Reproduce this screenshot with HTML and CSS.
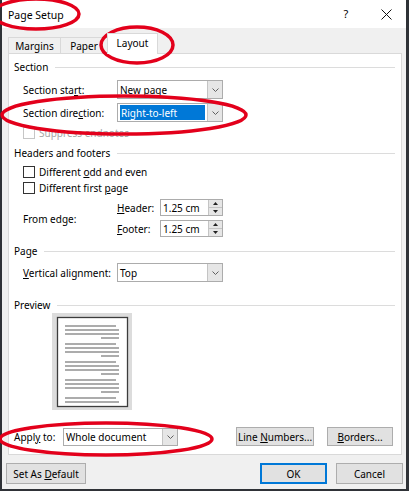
FILE: index.html
```html
<!DOCTYPE html>
<html>
<head>
<meta charset="utf-8">
<title>Page Setup</title>
<link rel="stylesheet" href="styles.css">
</head>
<body>
<div class="window">
  <div class="titlebar">
    <span class="title">Page Setup</span>
    <span class="cap help">?</span>
    <span class="cap close"><svg width="11" height="11" viewBox="0 0 11 11"><path d="M0.5 0.5 L10.5 10.5 M10.5 0.5 L0.5 10.5" stroke="#111" stroke-width="1" fill="none"/></svg></span>
  </div>
  <div class="tabs">
    <div class="tab t-margins">Margins</div>
    <div class="tab t-paper">Paper</div>
    <div class="tab t-layout active">Layout</div>
  </div>
  <div class="panel">
    <div class="glabel">Section</div>
    <div class="row r-start">
      <span class="lbl">Section sta<u>r</u>t:</span>
      <div class="combo">
        <span class="combo-text">New page</span>
        <span class="combo-btn"><svg width="7" height="4" viewBox="0 0 7 4"><path d="M0.5 0.5 L3.5 3.5 L6.5 0.5" stroke="#606060" fill="none"/></svg></span>
      </div>
    </div>
    <div class="row r-dir">
      <span class="lbl">Section dire<u>c</u>tion:</span>
      <div class="combo">
        <span class="combo-text"><span class="sel">Right-to-left</span></span>
        <span class="combo-btn"><svg width="7" height="4" viewBox="0 0 7 4"><path d="M0.5 0.5 L3.5 3.5 L6.5 0.5" stroke="#606060" fill="none"/></svg></span>
      </div>
    </div>
    <div class="row cb r-suppress disabled">
      <span class="box"></span><span>Suppress endnotes</span>
    </div>
    <div class="glabel g-hf">Headers and footers</div>
    <div class="row cb r-odd">
      <span class="box"></span><span>Different <u>o</u>dd and even</span>
    </div>
    <div class="row cb r-first">
      <span class="box"></span><span>Different first <u>p</u>age</span>
    </div>
    <div class="edge">
      <span class="lbl edge-lbl">From edge:</span>
      <div class="edge-fields">
        <div class="field">
          <span class="field-lbl"><u>H</u>eader:</span>
          <div class="spin">
            <span class="spin-text">1.25 cm</span>
            <span class="spin-btns">
              <span class="sb"><svg width="5" height="3" viewBox="0 0 5 3"><path d="M0 3 L2.5 0 L5 3 Z" fill="#222"/></svg></span>
              <span class="sb sb-down"><svg width="5" height="3" viewBox="0 0 5 3"><path d="M0 0 L2.5 3 L5 0 Z" fill="#222"/></svg></span>
            </span>
          </div>
        </div>
        <div class="field">
          <span class="field-lbl"><u>F</u>ooter:</span>
          <div class="spin">
            <span class="spin-text">1.25 cm</span>
            <span class="spin-btns">
              <span class="sb"><svg width="5" height="3" viewBox="0 0 5 3"><path d="M0 3 L2.5 0 L5 3 Z" fill="#222"/></svg></span>
              <span class="sb sb-down"><svg width="5" height="3" viewBox="0 0 5 3"><path d="M0 0 L2.5 3 L5 0 Z" fill="#222"/></svg></span>
            </span>
          </div>
        </div>
      </div>
    </div>
    <div class="glabel g-page">Page</div>
    <div class="row r-valign">
      <span class="lbl"><u>V</u>ertical alignment:</span>
      <div class="combo">
        <span class="combo-text">Top</span>
        <span class="combo-btn"><svg width="7" height="4" viewBox="0 0 7 4"><path d="M0.5 0.5 L3.5 3.5 L6.5 0.5" stroke="#606060" fill="none"/></svg></span>
      </div>
    </div>
    <div class="glabel g-preview">Preview</div>
    <div class="preview">
      <svg width="80" height="97" viewBox="0 0 80 97">
        <rect x="0" y="0" width="80" height="97" fill="#dcdcdc"/>
        <rect x="5.5" y="4.5" width="70" height="89" fill="#fff" stroke="#3c3c3c" stroke-width="1.3"/>
        <g stroke="#5a5a5a" stroke-width="1.2">
          <path d="M13 13 H64 M13 17 H67 M13 21 H67 M49 25 H67"/>
          <path d="M13 31 H64 M13 35 H67 M13 39 H67 M49 43 H67"/>
          <path d="M13 49 H64 M13 53 H67 M13 57 H67 M49 61 H67"/>
          <path d="M13 67 H64 M13 71 H67 M13 75 H67 M49 79 H67"/>
          <path d="M13 85 H64 M13 89 H67"/>
        </g>
      </svg>
    </div>
    <div class="row r-apply">
      <span class="apply-lbl">Appl<u>y</u> to:</span>
      <div class="combo combo-apply">
        <span class="combo-text">Whole document</span>
        <span class="combo-btn"><svg width="7" height="4" viewBox="0 0 7 4"><path d="M0.5 0.5 L3.5 3.5 L6.5 0.5" stroke="#606060" fill="none"/></svg></span>
      </div>
      <span class="btn btn-lines"><span>Line <u>N</u>umbers...</span></span>
      <span class="btn btn-borders"><span><u>B</u>orders...</span></span>
    </div>
  </div>
  <div class="footer">
    <span class="btn btn-default"><span>Set As <u>D</u>efault</span></span>
    <span class="btn btn-ok"><span>OK</span></span>
    <span class="btn btn-cancel"><span>Cancel</span></span>
  </div>
</div>
<svg class="annot" width="409" height="491" viewBox="0 0 409 491">
  <g fill="none" stroke="#e3001b" stroke-width="3.5">
    <ellipse cx="36" cy="14" rx="43" ry="15"/>
    <ellipse cx="137" cy="45" rx="36" ry="18"/>
    <ellipse cx="124" cy="115" rx="122" ry="19"/>
    <ellipse cx="106" cy="439" rx="106" ry="16"/>
  </g>
</svg>
</body>
</html>
```
FILE: styles.css
```css
* { box-sizing: border-box; }
html, body { margin: 0; padding: 0; }
body {
  width: 409px;
  height: 491px;
  overflow: hidden;
  position: relative;
  background: #2f3237;
  font-family: "Noto Sans", "Open Sans", sans-serif;
  font-size: 10px;
  line-height: 14px;
  color: #000;
}
u { text-decoration: underline; text-underline-offset: 1px; }

.window {
  margin-left: 2px;
  width: 404px;
  height: 489px;
  background: #f0f0f0;
  display: flex;
  flex-direction: column;
}

.titlebar {
  flex: none;
  height: 28px;
  background: #fff;
  display: flex;
  align-items: center;
  padding-left: 6px;
}
.title { flex: 1; font-size: 10.5px; margin-top: 1px; }
.cap {
  width: 40px;
  height: 28px;
  display: flex;
  align-items: center;
  justify-content: center;
}
.help { font-size: 11px; }

.tabs {
  flex: none;
  height: 25px;
  display: flex;
  align-items: flex-end;
  padding-left: 6px;
}
.tab {
  height: 16px;
  border: 1px solid #d9d9d9;
  border-bottom: none;
  background: #f0f0f0;
  display: flex;
  align-items: center;
  justify-content: center;
}
.tab + .tab { margin-left: -1px; }
.t-margins { width: 53px; }
.t-paper { width: 48px; }
.t-layout { width: 51px; }
.tab.active {
  height: 21px;
  margin-bottom: -1px;
  background: #fff;
  position: relative;
  z-index: 2;
  padding-bottom: 2px;
}

.panel {
  flex: none;
  margin-left: 6px;
  width: 394px;
  background: #fff;
  border: 1px solid #d9d9d9;
  padding: 6px 6px 8px 5px;
  display: flex;
  flex-direction: column;
}

.glabel {
  height: 14px;
  display: flex;
  align-items: center;
  gap: 7px;
}
.glabel::after {
  content: "";
  flex: 1;
  height: 1px;
  background: #dcdcdc;
}
.g-hf { margin-top: 7px; }
.g-page { margin-top: 7px; }
.g-preview { margin-top: 16px; }

.row {
  display: flex;
  align-items: center;
  padding-left: 9px;
}
.lbl { width: 94px; flex: none; }

.r-start { height: 19px; margin-top: 6px; }
.r-dir { height: 19px; margin-top: 4px; }
.r-suppress { height: 12px; margin-top: 5px; }
.r-odd { height: 14px; margin-top: 5px; }
.r-first { height: 14px; margin-top: 2px; }
.r-valign { height: 19px; margin-top: 5px; }

.combo {
  width: 106px;
  height: 19px;
  border: 1px solid #acacac;
  background: #fff;
  display: flex;
}
.combo-text {
  flex: 1;
  display: flex;
  align-items: center;
  padding-left: 2px;
}
.sel {
  background: #0078d7;
  color: #fff;
  flex: 1;
  align-self: stretch;
  margin: 1px 2px 1px 0;
  padding-left: 1px;
  display: flex;
  align-items: center;
}
.combo-btn {
  width: 15px;
  flex: none;
  background: #e6e6e6;
  border-left: 1px solid #c4c4c4;
  display: flex;
  align-items: center;
  justify-content: center;
}

.cb .box {
  width: 12px;
  height: 12px;
  border: 1px solid #333;
  background: #fff;
  margin-right: 4px;
  flex: none;
}
.disabled { color: #a6a6a6; }
.disabled .box { border-color: #c6c6c6; }

.edge {
  display: flex;
  padding-left: 9px;
  height: 38px;
  margin-top: 4px;
}
.edge-lbl {
  display: flex;
  align-items: center;
  padding-top: 2px;
}
.edge-fields {
  display: flex;
  flex-direction: column;
  gap: 4px;
}
.field {
  display: flex;
  align-items: center;
  height: 17px;
}
.field-lbl { width: 43px; }
.spin {
  width: 63px;
  height: 17px;
  border: 1px solid #acacac;
  background: #fff;
  display: flex;
}
.spin-text {
  flex: 1;
  display: flex;
  align-items: center;
  padding-left: 2px;
}
.spin-btns {
  width: 14px;
  flex: none;
  display: flex;
  flex-direction: column;
  background: #e6e6e6;
  border-left: 1px solid #c4c4c4;
}
.sb {
  flex: 1;
  display: flex;
  align-items: center;
  justify-content: center;
}
.sb-down { border-top: 1px solid #c4c4c4; }

.preview {
  margin-top: 1px;
  margin-left: 38px;
  height: 97px;
  display: flex;
}

.r-apply {
  margin-top: 17px;
  height: 19px;
  padding-left: 0;
}
.apply-lbl { width: 49px; flex: none; }
.combo-apply { width: 115px; height: 18px; }

.btn {
  display: flex;
  align-items: center;
  justify-content: center;
  background: #e1e1e1;
  border: 1px solid #adadad;
  flex: none;
}
.btn-lines { width: 78px; height: 19px; margin-left: auto; }
.btn-borders { width: 66px; height: 19px; margin-left: 13px; margin-right: 2px; }

.footer {
  flex: none;
  display: flex;
  align-items: center;
  padding: 8px 3px 0 4px;
}
.btn-default { width: 80px; height: 21px; }
.btn-ok {
  width: 67px;
  height: 21px;
  margin-left: auto;
  border: 2px solid #0078d7;
}
.btn-cancel { width: 67px; height: 21px; margin-left: 9px; }

.annot {
  position: absolute;
  top: 0;
  left: 0;
  pointer-events: none;
}
```
